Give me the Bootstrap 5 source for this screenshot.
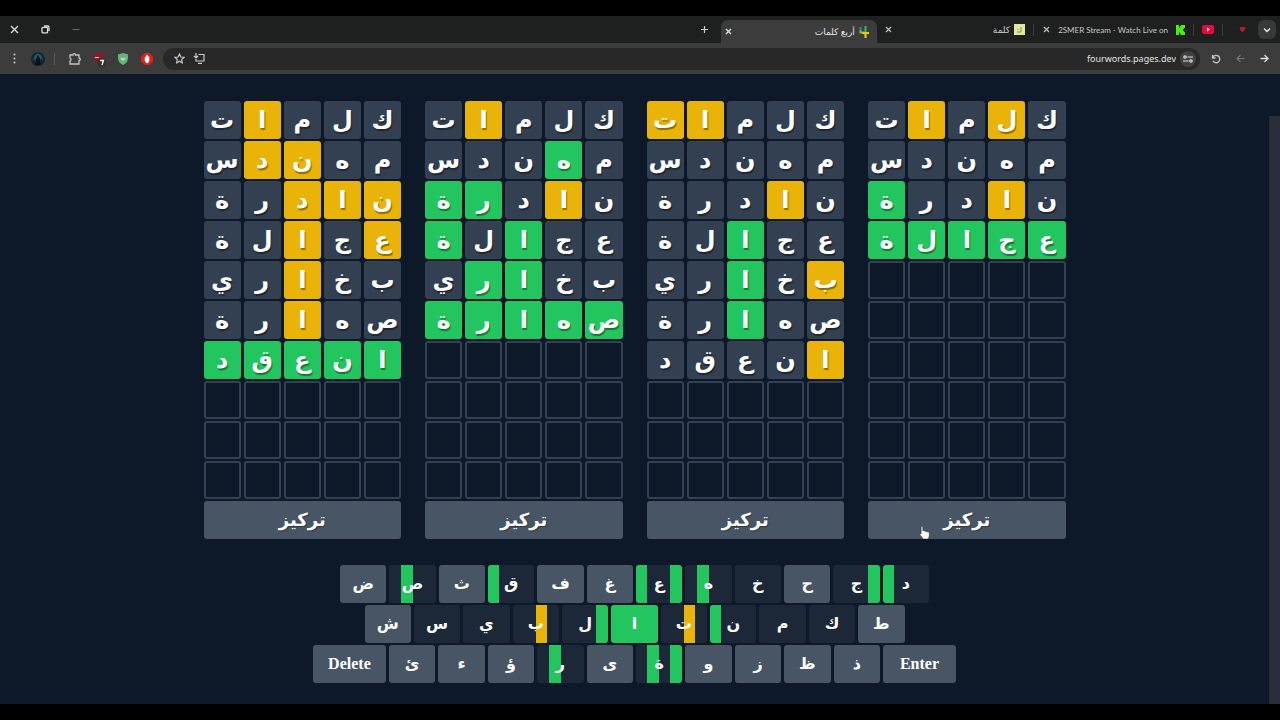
<!DOCTYPE html>
<html lang="ar">
<head>
<meta charset="utf-8">
<meta name="viewport" content="width=device-width, initial-scale=1">
<title>أربع كلمات</title>
<link rel="stylesheet" href="https://cdn.jsdelivr.net/npm/bootstrap@5.3.0/dist/css/bootstrap.min.css">
<style>
  body { background: #000; color: #fff; font-family: "Noto Sans", "DejaVu Sans", sans-serif; }
  .shell { min-height: 100vh; padding: 16px 0; }
  .tabstrip { background: #1e1f1f; height: 27px; font-size: 9px; color: #c8c8c8; }
  .toolbar { background: #3c3c3c; height: 31px; color: #c8c8c8; padding: 0 8px 0 6px; }
  .chrome-btn { background: none; border: 0; padding: 0; color: inherit; display: inline-flex; align-items: center; justify-content: center; width: 16px; height: 16px; flex: none; }
  .chrome-btn svg, .tabstrip svg { display: block; flex: none; }
  .win { width: 112px; padding-left: 6px; gap: 15px; }
  .tab-item { height: 22px; }
  .tab-on { background: #3c3c3c; border-radius: 7px 7px 0 0; width: 156px; height: 23px; color: #e4e4e4; }
  .tab-name { white-space: nowrap; }
  .tab-latin { font-family: Lato, "Noto Sans", sans-serif; font-size: 8px; }
  .tick { width: 1px; height: 12px; background: #3b3b3b; }
  .down { width: 18px; height: 19px; background: #393939; border-radius: 6px; color: #ddd; }
  .omni { background: #282828; border-radius: 11px; height: 22px; }
  .addr { background: none; border: 0; outline: 0; color: #e2e2e2; font-size: 9px; text-align: right; padding: 0; min-width: 0; direction: ltr; }
  .site { width: 16px; height: 16px; border-radius: 50%; background: #414141; }
  .stage { background: #0d1829; }
  .game { padding: 27px 12px 20px; }
  .boards { width: 100%; max-width: 862px; display: grid; grid-template-columns: repeat(4, 1fr); gap: 24px; }
  .board { display: grid; grid-template-columns: repeat(5, 1fr); gap: 2px 3px; font: bold 24px/32px "DejaVu Sans", sans-serif; }
  .tile { height: 38px; border-radius: 3px; border: 2px solid #334152; display: flex; align-items: center; justify-content: center; text-shadow: 1px 2px 1px rgba(0,0,0,.4); white-space: nowrap; min-width: 0; }
  .tile.miss { background: #324052; }
  .tile.near { background: #eab308; border-color: #eab308; }
  .tile.hit { background: #22c55e; border-color: #22c55e; }
  .focus-btn { grid-column: 1 / -1; height: 38px; border: 0; border-radius: 3px; background: #475564; color: #fff; font: bold 18px/28px "DejaVu Sans", sans-serif; padding: 0; text-shadow: 1px 1px 1px rgba(0,0,0,.3); }
  .keys { gap: 2px; margin-top: 26px; width: 100%; }
  .key-row { display: flex; gap: 3px; width: 100%; }
  .key-row.r1 { max-width: 589px; }
  .key-row.r2 { max-width: 540px; }
  .key-row.r3 { max-width: 643px; }
  .key { flex: 1 1 0; min-width: 0; height: 38px; border: 0; border-radius: 3px; padding: 0; background: #475564; color: #fff; font: bold 16px/24px "DejaVu Sans", sans-serif; }
  .key.used { background-color: #1c2838; }
  .key.wide { flex: 0 0 73px; font-family: "Liberation Serif", serif; }
  .rail { width: 11px; padding-top: 42px; }
  .thumb { background: #292c39; }
  .pointer { position: absolute; left: 51px; top: 24px; pointer-events: none; }
</style>
</head>
<body>
<div class="shell d-flex flex-column">
  <header>
    <div class="tabstrip d-flex align-items-center">
      <div class="win d-flex align-items-center">
        <button class="chrome-btn" aria-label="Close window"><svg width="9" height="9" viewBox="0 0 9 9" stroke="#ddd" stroke-width="1.4"><path d="M1 1l7 7M8 1L1 8"/></svg></button>
        <button class="chrome-btn" aria-label="Restore"><svg width="9" height="9" viewBox="0 0 9 9" fill="none" stroke="#ddd" stroke-width="1.3"><rect x="1" y="2.3" width="5.6" height="5.6" rx="1"/><path d="M3 1h3.6Q8 1 8 2.4V6"/></svg></button>
        <button class="chrome-btn" aria-label="Minimize"><svg width="8" height="3" viewBox="0 0 8 3"><path d="M.5 1.5h7" stroke="#666" stroke-width="1.2"/></svg></button>
      </div>
      <div class="d-flex align-items-center ms-auto align-self-stretch">
        <button class="chrome-btn me-2" aria-label="New tab"><svg width="9" height="9" viewBox="0 0 9 9"><path d="M4.500 1v7M1 4.500h7" stroke="#ccc" stroke-width="1.2"/></svg></button>
        <div class="tab-on d-flex align-items-center align-self-end pe-1">
          <button class="chrome-btn" aria-label="Close tab"><svg width="7" height="7" viewBox="0 0 7 7"><path d="M1 1l5 5M6 1L1 6" stroke="#ddd" stroke-width="1.4"/></svg></button>
          <span class="tab-name ms-auto me-1" dir="rtl">أربع كلمات</span>
          <svg class="me-1" width="10" height="12" viewBox="0 0 10 12" fill="none" stroke-width="2.200"><path d="M1.500 1v4.500" stroke="#1e8f8a"/><path d="M1.500 4.500v2h4" stroke="#6fbd3c"/><path d="M6.500 0v6" stroke="#2fb35f"/><path d="M3 7h7M6.500 6v6" stroke="#e8c415"/></svg>
        </div>
        <button class="chrome-btn ms-1" aria-label="Close tab"><svg width="7" height="7" viewBox="0 0 7 7"><path d="M1 1l5 5M6 1L1 6" stroke="#bbb" stroke-width="1.300"/></svg></button>
      </div>
      <div class="d-flex align-items-center ps-5 ms-5 tab-item">
        <span class="tab-name me-1" dir="rtl">كلمة</span>
        <svg width="11" height="11" viewBox="0 0 11 11"><rect width="11" height="11" fill="#dfe99b"/><path d="M3 8h4V3M4 5v1" stroke="#84905a" fill="none"/></svg>
        <i class="tick ms-2 me-1"></i>
        <button class="chrome-btn" aria-label="Close tab"><svg width="7" height="7" viewBox="0 0 7 7"><path d="M1 1l5 5M6 1L1 6" stroke="#bbb" stroke-width="1.300"/></svg></button>
        <span class="tab-name tab-latin ms-1">2SMER Stream - Watch Live on</span>
        <svg class="ms-2 me-2" width="9" height="10" viewBox="0 0 9 10"><path d="M0 0h3v2.500h1V1h1V0h4v3H8v1H7v2h1v1h1v3H5V9H4V7.500H3V10H0z" fill="#42f013"/></svg>
        <i class="tick me-2"></i>
        <svg width="12" height="9" viewBox="0 0 12 9"><rect width="12" height="9" rx="2" fill="#e5093c"/><path d="M5 2.500v4L8 4.500z" fill="#fff"/></svg>
        <i class="tick mx-2"></i>
        <svg class="ms-2 me-1" width="7" height="7" viewBox="0 0 7 7"><path d="M1 1h2l.5.6L4 1h2l.5 2-3 3.500-3-3.500z" fill="#bd1a1a"/></svg>
        <button class="chrome-btn down ms-2 me-1" aria-label="Search tabs"><svg width="8" height="6" viewBox="0 0 8 6"><path d="M1 1.500l3 3 3-3" fill="none" stroke="#eee" stroke-width="1.300"/></svg></button>
      </div>
    </div>
    <div class="toolbar d-flex align-items-center">
      <button class="chrome-btn me-2" aria-label="Menu"><svg width="3" height="11" viewBox="0 0 3 11" fill="#ccc"><circle cx="1.500" cy="1.500" r="1"/><circle cx="1.500" cy="5.500" r="1"/><circle cx="1.500" cy="9.500" r="1"/></svg></button>
      <button class="chrome-btn" aria-label="Profile"><svg width="14" height="14" viewBox="0 0 14 14"><circle cx="7" cy="7" r="7" fill="#15262e"/><path d="M3 5q1-3 4-3.500Q10 2 11 5l1 4-2-3-1 6H5L4 7 2 9z" fill="#25586a"/><path d="M7 3l2 4 1 6H4l1-6z" fill="#0b1218"/></svg></button>
      <i class="tick mx-2" style="background:#5a5a5a"></i>
      <button class="chrome-btn ms-1 me-2" aria-label="Extensions"><svg width="12" height="12" viewBox="0 0 12 12" fill="none" stroke="#c4c4c4" stroke-width="1.300"><path d="M1 2h3a1.300 1.300 0 0 1 2.600 0H10v3a1.300 1.300 0 0 1 0 2.600V11H1V8a1.600 1.600 0 0 0 0-3z"/></svg></button>
      <button class="chrome-btn me-2" aria-label="Ad blocker"><svg width="16" height="16" viewBox="0 0 16 16"><path d="M3 4l5-2 5 2-1 5-4 3-4-3z" fill="#a90f17"/><path d="M4 6.500h4" stroke="#eee"/><rect x="7" y="7" width="8" height="9" rx="2" fill="#333"/><path d="M9 9.500h3.500L11 14" stroke="#fff" fill="none" stroke-width="1.300"/></svg></button>
      <button class="chrome-btn me-2" aria-label="Shield"><svg width="12" height="12" viewBox="0 0 12 12"><path d="M6 0l5 1.500v4Q10.500 10 6 12 1.500 10 1 5.500v-4z" fill="#65b57b"/><path d="M4 5l2 2 2-2" fill="none" stroke="#dff3e1" stroke-width="1.200"/></svg></button>
      <button class="chrome-btn me-2" aria-label="Blocker"><svg width="12" height="12" viewBox="0 0 13 13"><path d="M4 0h5l4 4v5l-4 4H4L0 9V4z" fill="#df2118"/><path d="M4 5h1V3h1V2h1v1h1v1h1v4q0 2-2 3-2 0-3-3z" fill="#fff"/></svg></button>
      <div class="omni d-flex align-items-center flex-grow-1 ps-2 pe-1">
        <button class="chrome-btn me-1" aria-label="Bookmark"><svg width="11" height="11" viewBox="0 0 12 12"><path d="M6 1l1.500 3.300 3.500.4-2.600 2.400.7 3.600L6 8.900l-3.100 1.800.7-3.600L1 4.700l3.500-.4z" fill="none" stroke="#ccc" stroke-width="1.200"/></svg></button>
        <button class="chrome-btn" aria-label="Install"><svg width="12" height="11" viewBox="0 0 12 11" fill="none" stroke="#ccc" stroke-width="1.200"><path d="M5.500 1.500H11V8H3V6M5 10.300h4M3 0v4.500M1 3l2 2 2-2"/></svg></button>
        <input class="addr flex-grow-1 me-1" aria-label="Address" value="fourwords.pages.dev">
        <button class="chrome-btn site" aria-label="Site information"><svg width="10" height="8" viewBox="0 0 10 8" fill="none" stroke="#ddd" stroke-width="1.200"><circle cx="2" cy="2" r="1.200"/><path d="M4.500 2H10M0 6h5.500"/><circle cx="8" cy="6" r="1.200"/></svg></button>
      </div>
      <button class="chrome-btn ms-2 me-2" aria-label="Reload"><svg width="10" height="10" viewBox="0 0 10 10" fill="none" stroke="#c6c6c6" stroke-width="1.300"><path d="M1.500 1v3h3M1.500 4A3.700 3.700 0 1 1 1.800 6.800"/></svg></button>
      <button class="chrome-btn me-2" aria-label="Forward"><svg width="9" height="9" viewBox="0 0 9 9" fill="none" stroke="#777" stroke-width="1.200"><path d="M8.500 4.500H1M4.500 1L1 4.500 4.500 8"/></svg></button>
      <button class="chrome-btn" aria-label="Back"><svg width="9" height="9" viewBox="0 0 9 9" fill="none" stroke="#ddd" stroke-width="1.300"><path d="M.5 4.500H8M4.500 1L8 4.500 4.500 8"/></svg></button>
    </div>
  </header>

  <div class="stage d-flex flex-grow-1">
    <main class="game flex-grow-1 d-flex flex-column align-items-center" dir="rtl">
      <div class="boards" id="boards"></div>
      <div class="keys d-flex flex-column align-items-center" id="keys"></div>
    </main>
    <div class="rail d-flex flex-column"><div class="thumb flex-grow-1"></div></div>
  </div>
</div>

<script>
  // Guesses shared by every board; marks: g = right place, y = wrong place, . = absent
  const guesses = ['كلمات', 'مهندس', 'نادرة', 'عجالة', 'بخاري', 'صهارة', 'انعقد'];
  const marks = [
    ['.y.y.', '.....', '.y..g', 'ggggg'],
    ['...yy', '.....', '.y...', '..g..', 'y.g..', '..g..', 'y....'],
    ['...y.', '.g...', '.y.gg', '..g.g', '..gg.', 'ggggg'],
    ['...y.', '..yy.', 'yyy..', 'y.y..', '..y..', '..y..', 'ggggg']
  ];
  const kind = { g: 'hit', y: 'near', '.': 'miss' };
  const boards = document.getElementById('boards');
  marks.forEach((rows, b) => {
    let html = '';
    for (let r = 0; r < 10; r++)
      for (let c = 0; c < 5; c++)
        html += rows[r] ? `<div class="tile ${kind[rows[r][c]]}">${guesses[r][c]}</div>` : '<div class="tile"></div>';
    const pointer = b ? '' : `<svg class="pointer" width="12" height="16" viewBox="0 0 14 17"><path d="M2.500 1q1.500-1 2 .5V6l1-.3q1 0 1.300.8 1.500-.5 2 .6 2.700-.3 3.200 1.200v3q0 2-1.500 4.200H5L1 10.500q-.8-1.500 1.500-1z" fill="#fff" stroke="#222" stroke-width=".6"/></svg>`;
    html += `<button class="focus-btn position-relative">تركيز${pointer}</button>`;
    boards.insertAdjacentHTML('beforeend', `<section class="board">${html}</section>`);
  });

  // Each used key shows four quarters, left to right, one per board
  const used = { 'د': 'g...', 'ج': '...g', 'خ': '....', 'ه': '.g..', 'ع': 'g..g', 'ق': 'g...', 'ص': '.g..',
    'ك': '....', 'م': '....', 'ن': 'g...', 'ت': '..y.', 'ا': 'gggg', 'ل': '...g', 'ب': '..y.', 'ي': '....', 'س': '....',
    'ة': '.g.g', 'ر': '.g..' };
  const tone = { g: '#22c55e', y: '#eab308', '.': 'transparent' };
  const rows = ['د ج ح خ ه ع غ ف ق ث ص ض', 'ط ك م ن ت ا ل ب ي س ش', 'Enter ذ ظ ز و ة ى ر ؤ ء ئ Delete'];
  rows.forEach((row, i) => {
    const html = row.split(' ').map(k => {
      if (k.length > 1) return `<button class="key wide">${k}</button>`;
      if (!used[k]) return `<button class="key">${k}</button>`;
      const stops = [...used[k]].map((m, q) => `${tone[m]} ${q * 25}% ${q * 25 + 25}%`).join(',');
      return `<button class="key used" style="background-image:linear-gradient(90deg,${stops})">${k}</button>`;
    }).join('');
    document.getElementById('keys').insertAdjacentHTML('beforeend', `<div class="key-row r${i + 1}">${html}</div>`);
  });
</script>
<script src="https://cdn.jsdelivr.net/npm/bootstrap@5.3.0/dist/js/bootstrap.bundle.min.js"></script>
</body>
</html>
